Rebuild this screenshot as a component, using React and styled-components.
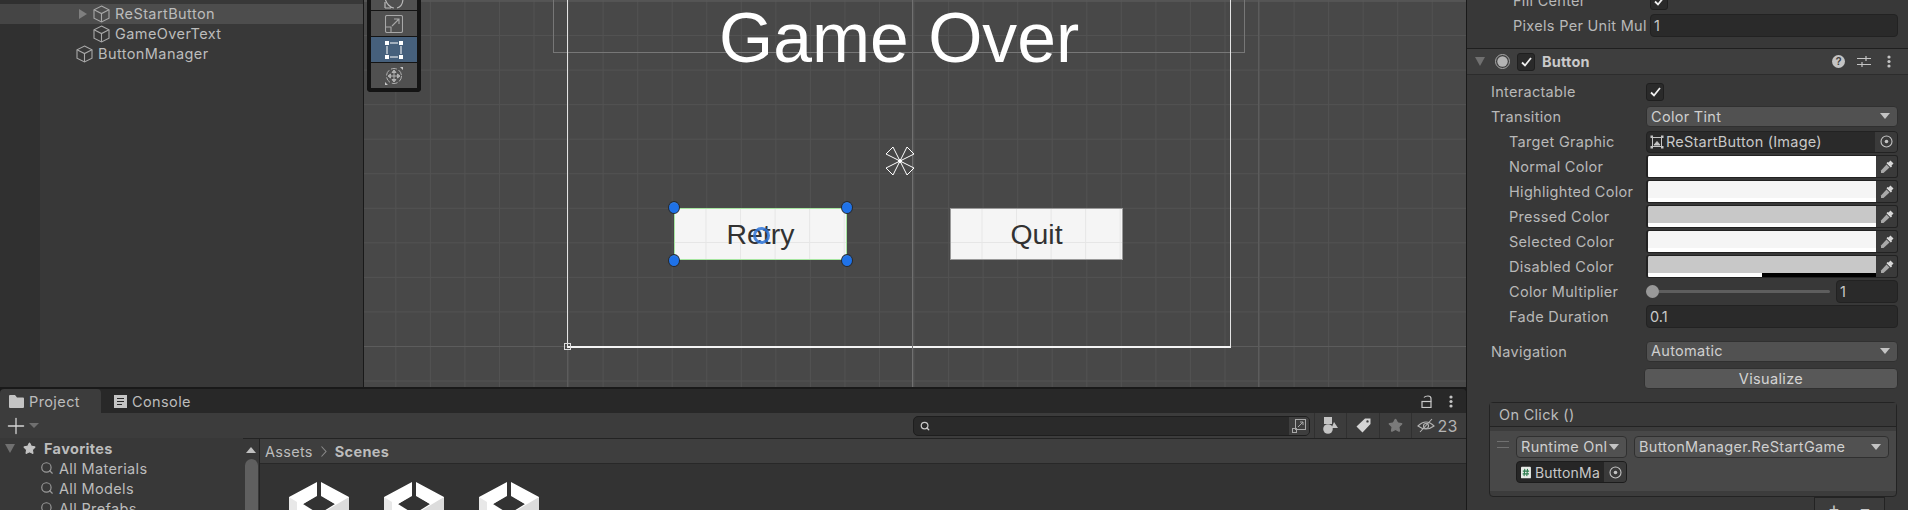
import React from "react";
import styled, { createGlobalStyle } from "styled-components";
import { Search, Star, Plus } from "lucide-react";

const GlobalStyle = createGlobalStyle`
  html, body { margin: 0; padding: 0; background: #191919; }
  body { font-family: Inter, "Liberation Sans", sans-serif; font-size: 13px; color: #bcbcbc; }
`;

const Editor = styled.div`
  width: 1908px;
  height: 510px;
  overflow: hidden;
  display: grid;
  grid-template-columns: 1466px 442px;
  background: #191919;
`;

const MainColumn = styled.div`
  display: grid;
  grid-template-rows: 387px 123px;
  min-height: 0;
`;

const TopRow = styled.div`
  display: grid;
  grid-template-columns: 363px 1fr;
  gap: 1px;
  background: #191919;
  min-height: 0;
`;

/* ---------- hierarchy ---------- */
const Hierarchy = styled.div`
  background: linear-gradient(90deg, #303030 0 40px, #383838 40px);
  overflow: hidden;
  padding-top: 4px;
`;

const TreeRow = styled.div`
  height: 20px;
  display: flex;
  align-items: center;
  padding-left: ${(p) => p.$indent}px;
  background: ${(p) => (p.$selected ? "linear-gradient(90deg, #454545 0 40px, #4d4d4d 40px)" : "transparent")};
`;

const TreeArrow = styled.span`
  width: 0;
  height: 0;
  margin-left: -14px;
  margin-right: 6px;
  border-left: 8px solid #7f7f7f;
  border-top: 5px solid transparent;
  border-bottom: 5px solid transparent;
`;

const TreeLabel = styled.span`
  margin-left: 5px;
  padding-bottom: 2px;
  font-size: 14.5px;
  letter-spacing: 0.42px;
  color: #bcbcbc;
`;

const CubeIcon = () => (
  <svg width="17" height="18" viewBox="0 0 17 18" fill="none" stroke="#a8a8a8" strokeWidth="1.1">
    <path d="M8.5 1 L16 4.8 V13.2 L8.5 17 L1 13.2 V4.8 Z" />
    <path d="M1 4.8 L8.5 8.6 L16 4.8 M8.5 8.6 V17" />
  </svg>
);

/* ---------- scene view ---------- */
const Scene = styled.div`
  position: relative;
  overflow: hidden;
  background-color: #484848;
  background-image:
    linear-gradient(90deg, #5c5c5c 1px, transparent 1px),
    linear-gradient(180deg, #5c5c5c 1px, transparent 1px),
    linear-gradient(90deg, #525252 1px, transparent 1px),
    linear-gradient(180deg, #525252 1px, transparent 1px);
  background-size: 345.5px 345.5px, 345.5px 345.5px, 34.55px 34.55px, 34.55px 34.55px;
  background-position: 203px 0.5px, 0 0.5px, 31.35px 0.5px, 0 0.5px;
`;

const CanvasFrame = styled.div`
  position: absolute;
  left: 203px;
  top: -20px;
  width: 662px;
  height: 365px;
  border: 1px solid #e4e4e4;
  border-bottom: 2px solid #f4f4f4;
`;

const CanvasCorner = styled.div`
  position: absolute;
  left: 200px;
  top: 343px;
  width: 5px;
  height: 5px;
  border: 1px solid #dcdcdc;
`;

const TextRect = styled.div`
  position: absolute;
  left: 189px;
  top: -20px;
  width: 690px;
  height: 71px;
  border: 1px solid #777777;
`;

const CenterLine = styled.div`
  position: absolute;
  left: 548px;
  top: 0;
  bottom: 0;
  width: 1px;
  background: #707070;
`;

const GameOverTitle = styled.div`
  position: absolute;
  left: 355px;
  top: 0;
  font-family: "Liberation Sans", Arial, sans-serif;
  font-size: 69.7px;
  line-height: 77px;
  color: #ffffff;
  white-space: nowrap;
`;

const GameButton = styled.div`
  position: absolute;
  left: ${(p) => p.$x}px;
  top: 208px;
  width: 173px;
  height: 52px;
  box-sizing: border-box;
  display: flex;
  align-items: center;
  justify-content: center;
  border: 1px solid ${(p) => (p.$selected ? "#a6e6a0" : "#9a9a9a")};
  background-color: #f5f5f5;
  background-image:
    linear-gradient(90deg, #e6e6e6 1px, transparent 1px),
    linear-gradient(180deg, #e6e6e6 1px, transparent 1px);
  background-size: 34.55px 34.55px;
  background-position: 30.5px 33px;
  font-family: "Liberation Sans", Arial, sans-serif;
  font-size: 28.4px;
  color: #323232;
`;

const Handle = styled.div`
  position: absolute;
  left: ${(p) => p.$x - 6.5}px;
  top: ${(p) => p.$y - 7}px;
  width: 10px;
  height: 11px;
  border-radius: 50%;
  background: radial-gradient(circle at 50% 65%, #1f72e8 0 60%, #4a8ad8);
  border: 1.5px solid #252a30;
`;

const PivotRing = styled.div`
  position: absolute;
  left: 389px;
  top: 227px;
  width: 11px;
  height: 11px;
  border-radius: 50%;
  border: 3px solid rgba(45, 115, 215, 0.85);
`;

const AnchorSvg = styled.svg`
  position: absolute;
  left: 521px;
  top: 146px;
`;

const ToolPanel = styled.div`
  position: absolute;
  left: 3px;
  top: -10px;
  width: 46px;
  background: #141414;
  border: 4px solid #141414;
  border-top: none;
  border-radius: 0 0 4px 4px;
  display: flex;
  flex-direction: column;
  gap: 1px;
`;

const ToolButton = styled.div`
  height: ${(p) => p.$h}px;
  display: flex;
  align-items: ${(p) => (p.$clip ? "flex-end" : "center")};
  justify-content: center;
  overflow: hidden;
  background: ${(p) => (p.$active ? "#46607c" : "#505050")};
`;

/* ---------- project window ---------- */
const ProjectPanel = styled.div`
  margin-top: 2px;
  display: grid;
  grid-template-rows: 24px 26px 1fr;
  background: #282828;
  min-height: 0;
  border-radius: 4px 4px 0 0;
  overflow: hidden;
`;

const TabBar = styled.div`
  display: flex;
  align-items: stretch;
  background: #282828;
`;

const Tab = styled.div`
  display: flex;
  align-items: center;
  gap: 5px;
  width: ${(p) => p.$w}px;
  padding-left: ${(p) => p.$pad}px;
  box-sizing: border-box;
  font-size: 14.5px;
  letter-spacing: 0.4px;
  background: ${(p) => (p.$active ? "#3c3c3c" : "transparent")};
  border-radius: 4px 4px 0 0;
`;

const TabSpacer = styled.div`
  flex: 1;
`;

const TabActions = styled.div`
  display: flex;
  align-items: center;
  gap: 14px;
  padding-right: 13px;
`;

const ProjectToolbar = styled.div`
  display: flex;
  align-items: center;
  background: #3c3c3c;
  border-bottom: 1px solid #232323;
  padding-left: 3px;
`;

const PlusMenu = styled.div`
  display: flex;
  align-items: center;
`;

const SearchBox = styled.div`
  margin: 0 4px 0 auto;
  width: 397px;
  height: 20px;
  box-sizing: border-box;
  border: 1px solid #1e1e1e;
  border-radius: 5px;
  background: #2a2a2a;
  display: flex;
  align-items: center;
  justify-content: space-between;
  padding-left: 6px;
  overflow: hidden;
`;

const SearchToggle = styled.div`
  width: 20px;
  height: 18px;
  background: #3e3e3e;
  display: flex;
  align-items: center;
  justify-content: center;
`;

const ToolIconCell = styled.div`
  width: ${(p) => p.$w}px;
  height: 25px;
  box-sizing: border-box;
  border-left: 1px solid #303030;
  display: flex;
  align-items: center;
  justify-content: center;
  gap: 2px;
  padding-right: ${(p) => p.$pr || 0}px;
  font-size: 16px;
  letter-spacing: 0.3px;
  color: #b4b4b4;
`;

const ProjectBody = styled.div`
  display: grid;
  grid-template-columns: 243px 16px 1px 1fr;
  min-height: 0;
  background: #383838;
`;

const Favorites = styled.div`
  background: #383838;
  margin-top: -1px;
  overflow: hidden;
`;

const FavRow = styled.div`
  height: 20px;
  display: flex;
  align-items: center;
  padding-left: ${(p) => p.$indent}px;
  gap: ${(p) => p.$gap || 5}px;
  font-size: 14.5px;
  letter-spacing: 0.35px;
  font-weight: ${(p) => (p.$bold ? 700 : 400)};
`;

const FoldTriangle = styled.span`
  flex: none;
  width: 0;
  height: 0;
  border-top: ${(p) => p.$size || 9}px solid #707070;
  border-left: 5px solid transparent;
  border-right: 5px solid transparent;
`;

const ScrollTrack = styled.div`
  background: #383838;
  display: flex;
  flex-direction: column;
  align-items: center;
  padding-top: 8px;
`;

const ScrollUp = styled.div`
  width: 0;
  height: 0;
  border-bottom: 6px solid #c0c0c0;
  border-left: 5px solid transparent;
  border-right: 5px solid transparent;
`;

const ScrollThumb = styled.div`
  margin-top: 6px;
  width: 13px;
  flex: 1;
  border-radius: 7px 7px 0 0;
  background: #5f5f5f;
`;

const VDivider = styled.div`
  background: #232323;
`;

const BrowserPane = styled.div`
  display: grid;
  grid-template-rows: 25px 1fr;
  min-height: 0;
  background: #333333;
`;

const Breadcrumb = styled.div`
  display: flex;
  align-items: center;
  gap: 8px;
  padding-left: 5px;
  background: #3e3e3e;
  border-bottom: 1px solid #282828;
  font-size: 14.5px;
  letter-spacing: 0.3px;
`;

const CrumbBold = styled.span`
  font-weight: 700;
`;

const AssetGrid = styled.div`
  display: flex;
  gap: 35px;
  padding: 18px 0 0 29px;
  overflow: hidden;
`;

const SceneAssetIcon = () => (
  <svg width="60" height="60" viewBox="0 0 60 60">
    <path d="M0 15 V45 L30 60 L60 45 V15 Z" fill="#ffffff" />
    <path d="M60 15 V45 L30 60 V33 Z" fill="#dcdcdc" />
    <path d="M0 15 V45 L8 40 V20 Z" fill="#e8e8e8" />
    <path d="M14 22 L30 12 L46 22 L30 32 Z" fill="#333333" />
    <path d="M0 0 H60 V15 L32 1 V13 H28 V1 L0 15 Z" fill="#333333" />
    <path d="M28 0 L0 15 L14 22 L28 14 Z M32 0 L60 15 L46 22 L32 14 Z" fill="#ffffff" />
  </svg>
);

/* ---------- inspector ---------- */
const Inspector = styled.div`
  border-left: 1px solid #191919;
  background: #383838;
  overflow: hidden;
  display: flex;
  flex-direction: column;
`;

const InspectorScroll = styled.div`
  margin-top: -12px;
  display: flex;
  flex-direction: column;
`;

const Row = styled.div`
  height: ${(p) => p.$h || 25}px;
  flex: none;
  display: grid;
  grid-template-columns: ${(p) => p.$labelW}px 1fr;
  align-items: center;
  padding: 0 10px 0 ${(p) => p.$left}px;
  margin-top: ${(p) => p.$mt || 0}px;
  box-sizing: border-box;
`;

const Label = styled.div`
  font-size: 14.5px;
  letter-spacing: 0.3px;
  white-space: nowrap;
  color: #b8b8b8;
`;

const CheckBox = styled.div`
  width: 16px;
  height: 16px;
  background: #2a2a2a;
  border: 1px solid #1f1f1f;
  border-radius: 3px;
  display: flex;
  align-items: center;
  justify-content: center;
`;

const HeaderCheck = styled(CheckBox)`
  margin-left: 7px;
`;

const TextField = styled.div`
  height: 23px;
  box-sizing: border-box;
  background: #2a2a2a;
  border: 1px solid #222222;
  border-radius: 4px;
  padding-left: 3px;
  display: flex;
  align-items: center;
  font-size: 14.5px;
  color: #c8c8c8;
`;

const SelectField = styled.div`
  height: ${(p) => p.$h || 21}px;
  box-sizing: border-box;
  background: #515151;
  border: 1px solid #303030;
  border-radius: 4px;
  padding: 0 7px 1px 4px;
  display: flex;
  align-items: center;
  justify-content: space-between;
  font-size: 14.5px;
  letter-spacing: 0.3px;
  color: #cfcfcf;
  overflow: hidden;
  white-space: nowrap;
`;

const DropArrow = styled.span`
  flex: none;
  width: 0;
  height: 0;
  border-top: 6px solid #c4c4c4;
  border-left: 5px solid transparent;
  border-right: 5px solid transparent;
`;

const ObjectField = styled.div`
  height: 22px;
  box-sizing: border-box;
  display: flex;
  align-items: center;
  background: #2a2a2a;
  border: 1px solid #222222;
  border-radius: 4px;
  overflow: hidden;
  padding-left: 3px;
  gap: 2px;
  font-size: 14.5px;
  letter-spacing: 0.22px;
  color: #c8c8c8;
  white-space: nowrap;
`;

const ObjectPicker = styled.div`
  margin-left: auto;
  flex: none;
  width: 22px;
  align-self: stretch;
  background: #3a3a3a;
  display: flex;
  align-items: center;
  justify-content: center;
`;

const PickerDot = () => (
  <svg width="13" height="13" viewBox="0 0 13 13" fill="none">
    <circle cx="6.5" cy="6.5" r="5.5" stroke="#c4c4c4" strokeWidth="1.1" />
    <circle cx="6.5" cy="6.5" r="1.8" fill="#c4c4c4" />
  </svg>
);

const ColorField = styled.div`
  height: 23px;
  box-sizing: border-box;
  display: flex;
  align-items: stretch;
  background: #2a2a2a;
  border: 1px solid #222222;
  border-left-width: 2px;
  border-radius: 3px;
  overflow: hidden;
`;

const Swatch = styled.div`
  width: 228px;
  display: flex;
  flex-direction: column;
  background: ${(p) => p.$color};
`;

const SwatchFill = styled.div`
  flex: 1;
`;

const AlphaBar = styled.div`
  height: 4px;
  background: ${(p) => (p.$half ? "linear-gradient(90deg, #fff 50%, #000 50%)" : "#ffffff")};
`;

const EyeCell = styled.div`
  flex: 1;
  background: #3a3a3a;
  display: flex;
  align-items: center;
  justify-content: center;
`;

const Dropper = () => (
  <svg width="14" height="14" viewBox="0 0 14 14">
    <path d="M8.5 2.5 L10.5 0.5 L13.5 3.5 L11.5 5.5 L12 6.5 L10.8 7.5 L6.5 3.2 L7.5 2 Z" fill="#d8d8d8" />
    <path d="M6.5 4.5 L9.5 7.5 L3.5 13 L1 13 L1 10.5 Z" fill="#a8a8a8" />
  </svg>
);

const SliderWrap = styled.div`
  display: grid;
  grid-template-columns: 1fr 62px;
  gap: 6px;
  align-items: center;
`;

const SliderTrack = styled.div`
  position: relative;
  height: 3px;
  background: #5e5e5e;
  border-radius: 2px;
`;

const SliderKnob = styled.div`
  position: absolute;
  left: 0;
  top: -5px;
  width: 13px;
  height: 13px;
  border-radius: 50%;
  background: #999999;
`;

const ComponentHeader = styled.div`
  height: 27px;
  flex: none;
  margin-top: 11px;
  box-sizing: border-box;
  background: #3e3e3e;
  border-top: 1px solid #1f1f1f;
  border-bottom: 1px solid #2c2c2c;
  display: flex;
  align-items: center;
  padding-left: 8px;
  gap: 10px;
`;

const HeaderToggle = styled.div`
  display: flex;
  align-items: center;
`;

const HeaderTitle = styled.div`
  margin-left: 7px;
  font-size: 14.5px;
  font-weight: 700;
  letter-spacing: 0.2px;
  color: #cacaca;
`;

const HeaderIcons = styled.div`
  margin-left: auto;
  display: flex;
  align-items: center;
  padding-right: 7px;
`;

const HeaderIconCell = styled.div`
  width: 25px;
  display: flex;
  align-items: center;
  justify-content: center;
`;

const VisualizeButton = styled.div`
  height: 21px;
  box-sizing: border-box;
  background: #585858;
  border: 1px solid #303030;
  border-radius: 4px;
  margin-left: -2px;
  display: flex;
  align-items: center;
  justify-content: center;
  font-size: 14.5px;
  letter-spacing: 0.35px;
  color: #d4d4d4;
`;

const EventBox = styled.div`
  flex: none;
  position: relative;
  margin: 12px 11px 0 22px;
  height: 95px;
  box-sizing: border-box;
  background: #3c3c3c;
  border: 1px solid #232323;
  border-radius: 4px;
`;

const EventHeader = styled.div`
  height: 24px;
  box-sizing: border-box;
  background: #383838;
  border-bottom: 1px solid #232323;
  padding-left: 9px;
  display: flex;
  align-items: center;
  font-size: 14.5px;
  letter-spacing: 0.3px;
`;

const EventEntry = styled.div`
  margin-top: 4px;
  padding: 5px 7px 0 26px;
  display: grid;
  grid-template-columns: 111px 255px;
  gap: 3px 7px;
  align-items: center;
  align-content: start;
  background: #484848;
  height: 60px;
  box-sizing: border-box;
  position: relative;
`;

const DragHandle = styled.div`
  position: absolute;
  left: 7px;
  top: 10px;
  width: 12px;
  height: 5px;
  border-top: 1px solid #707070;
  border-bottom: 1px solid #707070;
`;

const MiniObject = styled(ObjectField)`
  background: #262626;
  border-color: #1c1c1c;
  padding-left: 4px;
  gap: 4px;
  font-size: 14px;
`;

const ScriptIcon = () => (
  <svg width="11" height="13" viewBox="0 0 11 13">
    <rect width="11" height="13" rx="1" fill="#e8ece8" />
    <path d="M4.2 2.5 L3.4 10.5 M7.2 2.5 L6.4 10.5 M2 5 H9 M1.8 8 H8.8" stroke="#2e7d4f" strokeWidth="1.2" />
  </svg>
);

const AddRemoveTab = styled.div`
  position: absolute;
  right: 11px;
  top: 94px;
  width: 71px;
  height: 20px;
  box-sizing: border-box;
  background: #3c3c3c;
  border: 1px solid #232323;
  display: flex;
  justify-content: center;
  gap: 19px;
  color: #c8c8c8;
  font-size: 18px;
  line-height: 22px;
`;

/* ---------- small icons ---------- */
const Check = () => (
  <svg width="11" height="10" viewBox="0 0 11 10" fill="none" stroke="#f0f0f0" strokeWidth="1.8">
    <path d="M1 5.5 L4 8.5 L10 1" />
  </svg>
);

const Dots = () => (
  <svg width="4" height="13" viewBox="0 0 4 13" fill="#c4c4c4">
    <circle cx="2" cy="2" r="1.6" />
    <circle cx="2" cy="6.5" r="1.6" />
    <circle cx="2" cy="11" r="1.6" />
  </svg>
);

const ImageGlyph = () => (
  <svg width="14" height="14" viewBox="0 0 14 14" fill="none" stroke="#c4c4c4">
    <path d="M2.5 2.5 H11.5 V11.5 H2.5 Z" />
    <path d="M4 10 L7 6.5 L10 10 Z" fill="#c4c4c4" />
    <path d="M0.5 0.5 H3 V3 H0.5 Z M11 0.5 H13.5 V3 H11 Z M0.5 11 H3 V13.5 H0.5 Z M11 11 H13.5 V13.5 H11 Z" fill="#c4c4c4" stroke="none" />
  </svg>
);

const colorRows = [
  { label: "Normal Color", color: "#ffffff" },
  { label: "Highlighted Color", color: "#f5f5f5" },
  { label: "Pressed Color", color: "#c8c8c8" },
  { label: "Selected Color", color: "#f5f5f5" },
  { label: "Disabled Color", color: "#c8c8c8", half: true },
];

const handles = [
  [310, 208],
  [483, 208],
  [310, 261],
  [483, 261],
];

const App = () => (
  <>
    <GlobalStyle />
    <Editor>
      <MainColumn>
        <TopRow>
          <Hierarchy>
            <TreeRow $indent={93} $selected>
              <TreeArrow />
              <CubeIcon />
              <TreeLabel>ReStartButton</TreeLabel>
            </TreeRow>
            <TreeRow $indent={93}>
              <CubeIcon />
              <TreeLabel>GameOverText</TreeLabel>
            </TreeRow>
            <TreeRow $indent={76}>
              <CubeIcon />
              <TreeLabel>ButtonManager</TreeLabel>
            </TreeRow>
          </Hierarchy>
          <Scene>
            <TextRect />
            <CanvasFrame />
            <CanvasCorner />
            <CenterLine />
            <GameOverTitle>Game Over</GameOverTitle>
            <GameButton $x={310} $selected>Retry</GameButton>
            <GameButton $x={586}>Quit</GameButton>
            <PivotRing />
            {handles.map(([x, y]) => (
              <Handle key={`${x}-${y}`} $x={x} $y={y} />
            ))}
            <AnchorSvg width="30" height="30" viewBox="0 0 30 30" fill="none" stroke="#ffffff" strokeWidth="1">
              <path d="M15 15 L8 1 L1 8 Z M15 15 L22 1 L29 8 Z M15 15 L8 29 L1 22 Z M15 15 L22 29 L29 22 Z" />
              <circle cx="15" cy="15" r="1.5" fill="#ffffff" />
            </AnchorSvg>
            <ToolPanel>
              <ToolButton $h={20} $clip>
                <svg width="26" height="12" viewBox="0 0 26 12" fill="none" stroke="#b8b8b8" strokeWidth="1.2">
                  <path d="M4 0 C5 6 10 10 13 10 M4 10 V4 M4 10 H10 M16 10 C20 9 22 5 22 0" />
                </svg>
              </ToolButton>
              <ToolButton $h={25}>
                <svg width="18" height="18" viewBox="0 0 18 18" fill="none" stroke="#a8a8a8" strokeWidth="1.1">
                  <rect x="0.5" y="0.5" width="17" height="17" rx="1.5" />
                  <path d="M0.5 12 H6 V17.5 M7 11 L14 4 M9 4 H14 V9" />
                </svg>
              </ToolButton>
              <ToolButton $h={25} $active>
                <svg width="18" height="18" viewBox="0 0 18 18" fill="#ffffff">
                  <path d="M0 0 H4 V4 H0 Z M14 0 H18 V4 H14 Z M0 14 H4 V18 H0 Z M14 14 H18 V18 H14 Z" />
                  <path d="M5 2 H13 M5 16 H13 M2 5 V13 M16 5 V13" stroke="#ffffff" strokeWidth="1" fill="none" />
                </svg>
              </ToolButton>
              <ToolButton $h={25}>
                <svg width="20" height="20" viewBox="0 0 20 20" fill="none" stroke="#b0b0b0">
                  <circle cx="10" cy="10" r="7.5" strokeDasharray="6 2" />
                  <path d="M10 4 L12 6.5 H8 Z M10 16 L12 13.5 H8 Z M4 10 L6.5 8 V12 Z M16 10 L13.5 8 V12 Z" fill="#b0b0b0" />
                  <path d="M10 6 V14 M6 10 H14" />
                  <path d="M16 1 L19 1 L19 4 Z M1 16 L1 19 L4 19 Z" fill="#c8c8c8" stroke="none" />
                </svg>
              </ToolButton>
            </ToolPanel>
          </Scene>
        </TopRow>
        <ProjectPanel>
          <TabBar>
            <Tab $active $w={101} $pad={9}>
              <svg width="15" height="13" viewBox="0 0 15 13" fill="#c4c4c4">
                <path d="M0 1 Q0 0 1 0 H6 L8 2.5 H14 Q15 2.5 15 3.5 V12 Q15 13 14 13 H1 Q0 13 0 12 Z" />
              </svg>
              Project
            </Tab>
            <Tab $w={110} $pad={13}>
              <svg width="13" height="13" viewBox="0 0 13 13" fill="none" stroke="#c4c4c4">
                <rect x="0.5" y="0.5" width="12" height="12" fill="#c4c4c4" />
                <path d="M3 3.5 H10 M3 6.5 H10 M3 9.5 H8" stroke="#282828" strokeWidth="1.2" />
              </svg>
              Console
            </Tab>
            <TabSpacer />
            <TabActions>
              <svg width="14" height="13" viewBox="0 0 14 13" fill="none" stroke="#c8c8c8" strokeWidth="1.2">
                <rect x="1" y="6.5" width="9" height="6" />
                <path d="M3 2.5 Q4 1 7 1 Q10 1 10 3.5 V6.5" />
              </svg>
              <Dots />
            </TabActions>
          </TabBar>
          <ProjectToolbar>
            <PlusMenu>
              <Plus size={26} color="#d4d4d4" strokeWidth={1.2} />
              <FoldTriangle $size={5} />
            </PlusMenu>
            <SearchBox>
              <Search size={10} color="#c8c8c8" strokeWidth={3} />
              <SearchToggle>
                <svg width="14" height="14" viewBox="0 0 14 14" fill="none" stroke="#a8a8a8">
                  <rect x="3.5" y="0.5" width="10" height="10" />
                  <rect x="0.5" y="9.5" width="4" height="4" />
                  <path d="M6 8 L11 3 M8 3 H11 V6" />
                </svg>
              </SearchToggle>
            </SearchBox>
            <ToolIconCell $w={32}>
              <svg width="15" height="17" viewBox="0 0 15 17" fill="#c4c4c4">
                <rect x="1" y="0" width="8" height="7" />
                <circle cx="5" cy="12" r="4.8" />
                <path d="M11 5 L15 11 H8.5 Z" />
              </svg>
            </ToolIconCell>
            <ToolIconCell $w={33}>
              <svg width="15" height="15" viewBox="0 0 15 15">
                <path d="M9 0.5 H14.5 V6 L6.5 14.5 L0.5 8.5 Z M11.5 2.2 A1.2 1.2 0 1 0 11.5 4.6 A1.2 1.2 0 1 0 11.5 2.2 Z" fill="#d4d4d4" fillRule="evenodd" />
              </svg>
            </ToolIconCell>
            <ToolIconCell $w={32}>
              <Star size={15} color="#7a7a7a" fill="#7a7a7a" />
            </ToolIconCell>
            <ToolIconCell $w={55} $pr={3}>
              <svg width="18" height="15" viewBox="0 0 18 15" fill="none" stroke="#b4b4b4" strokeWidth="1.1">
                <path d="M1 8 Q9 0 17 8 Q9 14 1 8 Z" />
                <circle cx="9" cy="8" r="2.5" />
                <path d="M3 14 L15 1" />
              </svg>
              23
            </ToolIconCell>
          </ProjectToolbar>
          <ProjectBody>
            <Favorites>
              <FavRow $indent={5} $bold $gap={8}>
                <FoldTriangle />
                <Star size={13} color="#c4c4c4" fill="#c4c4c4" />
                Favorites
              </FavRow>
              <FavRow $indent={40}><Search size={14} color="#9a9a9a" />All Materials</FavRow>
              <FavRow $indent={40}><Search size={14} color="#9a9a9a" />All Models</FavRow>
              <FavRow $indent={40}><Search size={14} color="#9a9a9a" />All Prefabs</FavRow>
            </Favorites>
            <ScrollTrack>
              <ScrollUp />
              <ScrollThumb />
            </ScrollTrack>
            <VDivider />
            <BrowserPane>
              <Breadcrumb>
                <span>Assets</span>
                <svg width="6" height="11" viewBox="0 0 6 11" fill="none" stroke="#8a8a8a" strokeWidth="1.1">
                  <path d="M0.5 0.5 L5 5.5 L0.5 10.5" />
                </svg>
                <CrumbBold>Scenes</CrumbBold>
              </Breadcrumb>
              <AssetGrid>
                <SceneAssetIcon />
                <SceneAssetIcon />
                <SceneAssetIcon />
              </AssetGrid>
            </BrowserPane>
          </ProjectBody>
        </ProjectPanel>
      </MainColumn>

      <Inspector>
        <InspectorScroll>
          <Row $h={25} $left={46} $labelW={137}>
            <Label>Fill Center</Label>
            <CheckBox><Check /></CheckBox>
          </Row>
          <Row $h={24} $left={46} $labelW={137}>
            <Label>Pixels Per Unit Mul</Label>
            <TextField>1</TextField>
          </Row>
          <ComponentHeader>
            <FoldTriangle />
            <HeaderToggle>
              <svg width="15" height="15" viewBox="0 0 15 15">
                <circle cx="7.5" cy="7.5" r="7" fill="none" stroke="#a8a8a8" />
                <circle cx="7.5" cy="7.5" r="5.2" fill="#b4b4b4" />
              </svg>
              <HeaderCheck><Check /></HeaderCheck>
              <HeaderTitle>Button</HeaderTitle>
            </HeaderToggle>
            <HeaderIcons>
              <HeaderIconCell>
                <svg width="13" height="13" viewBox="0 0 13 13">
                  <circle cx="6.5" cy="6.5" r="6.5" fill="#c4c4c4" />
                  <text x="6.5" y="10" textAnchor="middle" fontSize="10" fontWeight="700" fontFamily="Liberation Sans" fill="#3e3e3e">?</text>
                </svg>
              </HeaderIconCell>
              <HeaderIconCell>
                <svg width="14" height="13" viewBox="0 0 14 13" fill="none" stroke="#c4c4c4" strokeWidth="1.2">
                  <path d="M0 3.5 H14 M0 9.5 H14 M9 1 V6 M5 7 V12" />
                </svg>
              </HeaderIconCell>
              <HeaderIconCell><Dots /></HeaderIconCell>
            </HeaderIcons>
          </ComponentHeader>
          <Row $mt={4} $left={24} $labelW={155} $h={25}>
            <Label>Interactable</Label>
            <CheckBox><Check /></CheckBox>
          </Row>
          <Row $left={24} $labelW={155} $h={25}>
            <Label>Transition</Label>
            <SelectField>Color Tint<DropArrow /></SelectField>
          </Row>
          <Row $left={42} $labelW={137}>
            <Label>Target Graphic</Label>
            <ObjectField>
              <ImageGlyph />
              ReStartButton (Image)
              <ObjectPicker><PickerDot /></ObjectPicker>
            </ObjectField>
          </Row>
          {colorRows.map((row) => (
            <Row key={row.label} $left={42} $labelW={137}>
              <Label>{row.label}</Label>
              <ColorField>
                <Swatch $color={row.color}>
                  <SwatchFill />
                  <AlphaBar $half={row.half} />
                </Swatch>
                <EyeCell><Dropper /></EyeCell>
              </ColorField>
            </Row>
          ))}
          <Row $left={42} $labelW={137}>
            <Label>Color Multiplier</Label>
            <SliderWrap>
              <SliderTrack><SliderKnob /></SliderTrack>
              <TextField>1</TextField>
            </SliderWrap>
          </Row>
          <Row $left={42} $labelW={137}>
            <Label>Fade Duration</Label>
            <TextField>0.1</TextField>
          </Row>
          <Row $mt={10} $left={24} $labelW={155} $h={24}>
            <Label>Navigation</Label>
            <SelectField>Automatic<DropArrow /></SelectField>
          </Row>
          <Row $mt={3} $left={24} $labelW={155} $h={24}>
            <span />
            <VisualizeButton>Visualize</VisualizeButton>
          </Row>
          <EventBox>
            <EventHeader>On Click ()</EventHeader>
            <EventEntry>
              <DragHandle />
              <SelectField $h={22}>Runtime Onl<DropArrow /></SelectField>
              <SelectField $h={22}>ButtonManager.ReStartGame<DropArrow /></SelectField>
              <MiniObject>
                <ScriptIcon />
                ButtonMa
                <ObjectPicker><PickerDot /></ObjectPicker>
              </MiniObject>
            </EventEntry>
            <AddRemoveTab><span>+</span><span>−</span></AddRemoveTab>
          </EventBox>
        </InspectorScroll>
      </Inspector>
    </Editor>
  </>
);

export default App;
